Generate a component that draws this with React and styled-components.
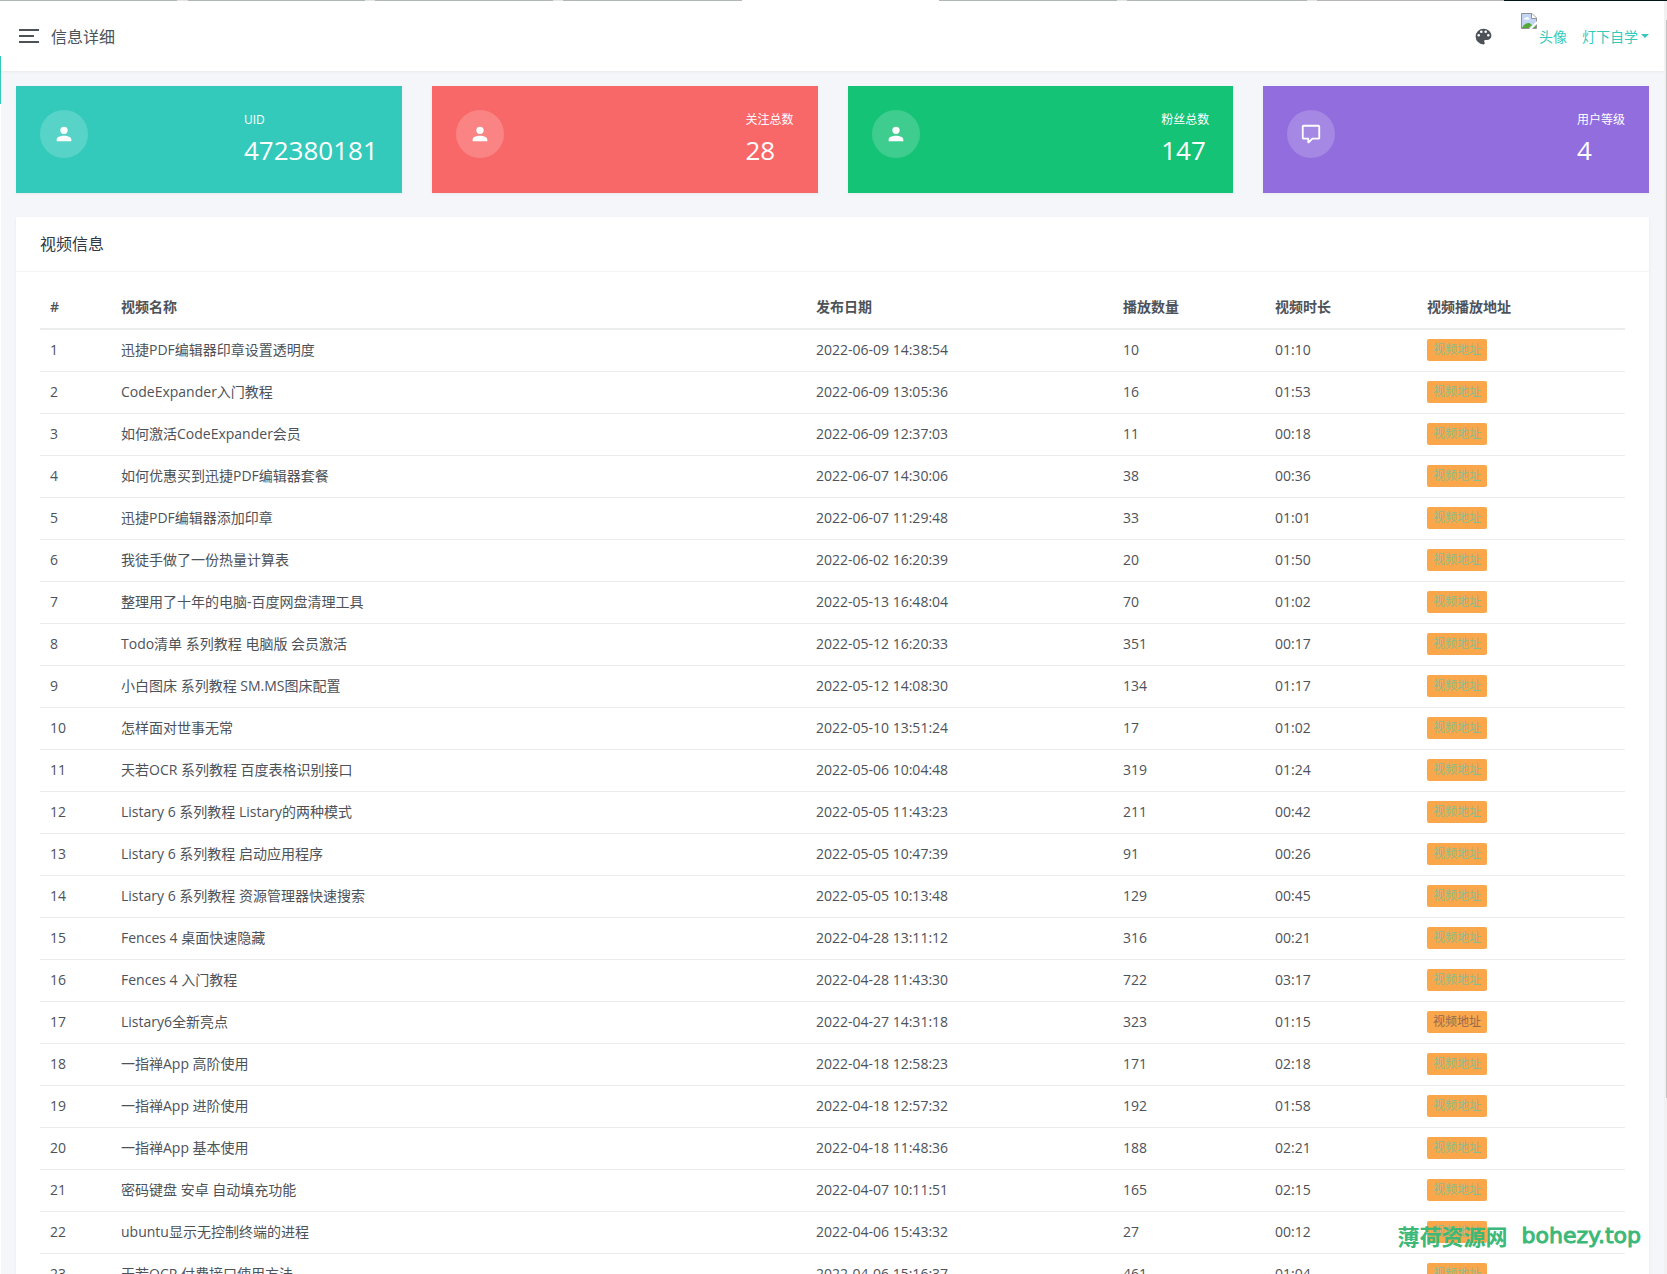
import styled, { createGlobalStyle } from 'styled-components'

const videos = [
  ['迅捷PDF编辑器印章设置透明度', '2022-06-09 14:38:54', 10, '01:10'],
  ['CodeExpander入门教程', '2022-06-09 13:05:36', 16, '01:53'],
  ['如何激活CodeExpander会员', '2022-06-09 12:37:03', 11, '00:18'],
  ['如何优惠买到迅捷PDF编辑器套餐', '2022-06-07 14:30:06', 38, '00:36'],
  ['迅捷PDF编辑器添加印章', '2022-06-07 11:29:48', 33, '01:01'],
  ['我徒手做了一份热量计算表', '2022-06-02 16:20:39', 20, '01:50'],
  ['整理用了十年的电脑-百度网盘清理工具', '2022-05-13 16:48:04', 70, '01:02'],
  ['Todo清单 系列教程 电脑版 会员激活', '2022-05-12 16:20:33', 351, '00:17'],
  ['小白图床 系列教程 SM.MS图床配置', '2022-05-12 14:08:30', 134, '01:17'],
  ['怎样面对世事无常', '2022-05-10 13:51:24', 17, '01:02'],
  ['天若OCR 系列教程 百度表格识别接口', '2022-05-06 10:04:48', 319, '01:24'],
  ['Listary 6 系列教程 Listary的两种模式', '2022-05-05 11:43:23', 211, '00:42'],
  ['Listary 6 系列教程 启动应用程序', '2022-05-05 10:47:39', 91, '00:26'],
  ['Listary 6 系列教程 资源管理器快速搜索', '2022-05-05 10:13:48', 129, '00:45'],
  ['Fences 4 桌面快速隐藏', '2022-04-28 13:11:12', 316, '00:21'],
  ['Fences 4 入门教程', '2022-04-28 11:43:30', 722, '03:17'],
  ['Listary6全新亮点', '2022-04-27 14:31:18', 323, '01:15'],
  ['一指禅App 高阶使用', '2022-04-18 12:58:23', 171, '02:18'],
  ['一指禅App 进阶使用', '2022-04-18 12:57:32', 192, '01:58'],
  ['一指禅App 基本使用', '2022-04-18 11:48:36', 188, '02:21'],
  ['密码键盘 安卓 自动填充功能', '2022-04-07 10:11:51', 165, '02:15'],
  ['ubuntu显示无控制终端的进程', '2022-04-06 15:43:32', 27, '00:12'],
  ['天若OCR 付费接口使用方法', '2022-04-06 15:16:37', 461, '01:04'],
]

const ACCOUNT = 'M12,4A4,4 0 0,1 16,8A4,4 0 0,1 12,12A4,4 0 0,1 8,8A4,4 0 0,1 12,4M12,14C16.42,14 20,15.79 20,18V20H4V18C4,15.79 7.58,14 12,14Z'
const COMMENT = 'M9,22A1,1 0 0,1 8,21V18H4A2,2 0 0,1 2,16V4C2,2.89 2.9,2 4,2H20A2,2 0 0,1 22,4V16A2,2 0 0,1 20,18H13.9L10.2,21.71C10,21.9 9.75,22 9.5,22H9M10,16V19.08L13.08,16H20V4H4V16H10Z'
const PALETTE = 'M17.5,12A1.5,1.5 0 0,1 16,10.5A1.5,1.5 0 0,1 17.5,9A1.5,1.5 0 0,1 19,10.5A1.5,1.5 0 0,1 17.5,12M14.5,8A1.5,1.5 0 0,1 13,6.5A1.5,1.5 0 0,1 14.5,5A1.5,1.5 0 0,1 16,6.5A1.5,1.5 0 0,1 14.5,8M9.5,8A1.5,1.5 0 0,1 8,6.5A1.5,1.5 0 0,1 9.5,5A1.5,1.5 0 0,1 11,6.5A1.5,1.5 0 0,1 9.5,8M6.5,12A1.5,1.5 0 0,1 5,10.5A1.5,1.5 0 0,1 6.5,9A1.5,1.5 0 0,1 8,10.5A1.5,1.5 0 0,1 6.5,12M12,3A9,9 0 0,0 3,12A9,9 0 0,0 12,21A1.5,1.5 0 0,0 13.5,19.5C13.5,19.11 13.35,18.76 13.11,18.5C12.88,18.23 12.73,17.88 12.73,17.5A1.5,1.5 0 0,1 14.23,16H16A5,5 0 0,0 21,11C21,6.58 16.97,3 12,3Z'

const stats = [
  { label: 'UID', value: '472380181', color: '#33cabb', icon: ACCOUNT },
  { label: '关注总数', value: '28', color: '#f96868', icon: ACCOUNT },
  { label: '粉丝总数', value: '147', color: '#15c377', icon: ACCOUNT },
  { label: '用户等级', value: '4', color: '#926dde', icon: COMMENT },
]

function Icon({ path, size }) {
  return (
    <svg width={size} height={size} viewBox="0 0 24 24" fill="currentColor" aria-hidden="true">
      <path d={path} />
    </svg>
  )
}

function MissingImage() {
  return (
    <svg width="16" height="16" viewBox="0 0 16 16" aria-hidden="true">
      <path d="M.5 .5H11L15.5 5V9L9 15.5H.5Z" fill="#c3d5f5" />
      <path d="M3 6.5C3 5 4.2 4.6 4.8 5C5.4 3.4 7.6 3.8 7.6 5.2C8.8 5.2 8.8 6.5 8 6.5Z" fill="#fff" />
      <path d="M1 15C3 11 6.5 9 9 10.5L11 12L8 15Z" fill="#56a936" />
      <path d="M.5 15.5V.5H11L15.5 5V15.5Z" fill="none" stroke="#929292" />
      <path d="M10.5 .5V5.5H15.5" fill="#fff" stroke="#929292" />
      <path d="M16 8V11L11 16H8Z" fill="#fff" />
      <path d="M15 12V15H12Z" fill="#56a936" />
    </svg>
  )
}

export default function App() {
  return (
    <Page>
      <GlobalStyle />
      <TabStrip />
      <Body>
        <SideEdge />
        <Main>
          <Header>
            <Toggle aria-label="menu"><i /><i /><i /></Toggle>
            <PageTitle>信息详细</PageTitle>
            <Palette aria-label="theme"><Icon path={PALETTE} size={21} /></Palette>
            <UserLink href="#user">
              <Avatar><MissingImage /><span>头像</span></Avatar>
              <UserName>灯下自学<Caret /></UserName>
            </UserLink>
          </Header>

          <Content>
            <Cards>
              {stats.map((stat) => (
                <Card key={stat.label} $color={stat.color}>
                  <Circle><Icon path={stat.icon} size={22} /></Circle>
                  <div>
                    <Label>{stat.label}</Label>
                    <Value>{stat.value}</Value>
                  </div>
                </Card>
              ))}
            </Cards>

            <Panel>
              <PanelTitle>视频信息</PanelTitle>
              <PanelBody>
                <Table>
                  <thead>
                    <tr>
                      <Th $width="71px">#</Th>
                      <Th>视频名称</Th>
                      <Th $width="307px">发布日期</Th>
                      <Th $width="152px">播放数量</Th>
                      <Th $width="152px">视频时长</Th>
                      <Th $width="208px">视频播放地址</Th>
                    </tr>
                  </thead>
                  <tbody>
                    {videos.map(([name, date, plays, length], index) => (
                      <tr key={name}>
                        <Td>{index + 1}</Td>
                        <Td>{name}</Td>
                        <Td>{date}</Td>
                        <Td>{plays}</Td>
                        <Td>{length}</Td>
                        <Td><Badge href="#video" $active={index === 16}>视频地址</Badge></Td>
                      </tr>
                    ))}
                  </tbody>
                </Table>
              </PanelBody>
            </Panel>
          </Content>
        </Main>
        <ScrollTrack><ScrollThumb /></ScrollTrack>
      </Body>
      <Watermark><b>薄荷资源网</b><span>bohezy.top</span></Watermark>
    </Page>
  )
}

const GlobalStyle = createGlobalStyle`
  * {
    box-sizing: border-box;
  }
  body {
    margin: 0;
    overflow: hidden;
    font-family: "Open Sans", "Noto Sans CJK SC", sans-serif;
    font-size: 14px;
    line-height: 21px;
    color: #4d5259;
    background: #f5f6fa;
  }
  a {
    color: #33cabb;
    text-decoration: none;
  }
  button {
    display: flex;
    padding: 0;
    border: none;
    color: inherit;
    background: transparent;
  }
  svg {
    display: block;
  }
`

const Page = styled.div`
  position: relative;
  display: flex;
  flex-direction: column;
  height: 100vh;
  overflow: hidden;
`

const TabStrip = styled.div`
  flex: none;
  height: 1px;
  background: linear-gradient(
    90deg,
    #b1b7b5 10.6%, #e3e5e5 10.6% 11.3%,
    #b1b7b5 11.3% 21.9%, #e3e5e5 21.9% 22.5%,
    #b1b7b5 22.5% 33.2%, #e3e5e5 33.2% 33.8%,
    #b1b7b5 33.8% 44.5%, #fff 44.5% 56.3%,
    #b1b7b5 56.3% 67%, #e3e5e5 67% 67.6%,
    #b1b7b5 67.6% 78.4%, #e3e5e5 78.4% 79%,
    #b7b5b5 79% 90.2%, #04151a 90.2%
  );
`

const Body = styled.div`
  display: flex;
  flex: 1;
  min-height: 0;
`

const SideEdge = styled.div`
  flex: none;
  width: 1px;
  background: linear-gradient(#fff 55px, #33cabb 55px 103px, #fff 103px);
`

const Main = styled.main`
  flex: 1;
  min-width: 0;
  overflow: hidden;
`

const Header = styled.header`
  display: flex;
  align-items: center;
  height: 70px;
  padding: 0 15px 0 18px;
  background: #fff;
  box-shadow: 0 1px 3px rgba(0, 0, 0, .05);
`

const Toggle = styled.button`
  flex-direction: column;
  gap: 4px;

  i {
    width: 20px;
    height: 2px;
    background: #4d5259;
  }
  i:nth-child(2) {
    width: 15px;
  }
`

const PageTitle = styled.h1`
  margin: 0 auto 0 12px;
  padding-top: 2px;
  font-size: 16px;
  font-weight: 400;
`

const Palette = styled.button`
  margin-right: 27px;
`

const UserLink = styled.a`
  display: flex;
  align-items: center;
  gap: 15px;
`

const Avatar = styled.span`
  display: flex;
  align-items: flex-start;
  gap: 2px;
  height: 46px;

  span {
    margin-top: 13px;
  }
`

const UserName = styled.span`
  display: flex;
  align-items: center;
  gap: 3px;
`

const Caret = styled.i`
  border: 4px solid transparent;
  border-top-color: currentColor;
  border-bottom: 0;
`

const Content = styled.div`
  padding: 15px;
`

const Cards = styled.div`
  display: grid;
  grid-template-columns: repeat(4, 1fr);
  gap: 30px;
  margin-bottom: 24px;
`

const Card = styled.section`
  display: flex;
  justify-content: space-between;
  padding: 24px;
  color: #fff;
  background: ${props => props.$color};
  box-shadow: 0 1px 3px rgba(0, 0, 0, .05);
`

const Circle = styled.div`
  display: flex;
  align-items: center;
  justify-content: center;
  width: 48px;
  height: 48px;
  border-radius: 50%;
  background: rgba(255, 255, 255, .18);
`

const Label = styled.p`
  margin: 0 0 2px;
  font-size: 12px;
  line-height: 20px;
`

const Value = styled.p`
  margin: 0;
  font-size: 26px;
  line-height: 37px;
`

const Panel = styled.section`
  background: #fff;
  box-shadow: 0 1px 3px rgba(0, 0, 0, .05);
`

const PanelTitle = styled.h2`
  margin: 0;
  padding: 16px 24px;
  border-bottom: 1px solid #f3f4f5;
  font-size: 16px;
  font-weight: 400;
  line-height: 22px;
  color: #313944;
`

const PanelBody = styled.div`
  padding: 15px 24px;
`

const Table = styled.table`
  width: 100%;
  table-layout: fixed;
  border-spacing: 0;
`

const Th = styled.th`
  width: ${props => props.$width || 'auto'};
  height: 43px;
  padding: 0 10px 2px;
  border-bottom: 2px solid #ebeded;
  font-weight: 600;
  text-align: left;
`

const Td = styled.td`
  height: 42px;
  padding: 0 10px 2px;
  border-bottom: 1px solid #ebeded;
`

const Badge = styled.a`
  display: block;
  width: fit-content;
  padding: 0 6px;
  border-radius: 2px;
  font-size: 12px;
  line-height: 22px;
  color: ${props => props.$active ? '#8f6c50' : '#8abd8c'};
  background: #faa64b;
`

const ScrollTrack = styled.div`
  flex: none;
  width: 3px;
  padding-top: 19px;
  background: #f1f1f1;
`

const ScrollThumb = styled.div`
  width: 1px;
  height: 86%;
  margin-left: auto;
  background: #c1c1c1;
`

const Watermark = styled.div`
  position: absolute;
  right: 26px;
  bottom: 28px;
  display: flex;
  gap: 14px;
  font-family: "DejaVu Sans", "Noto Sans CJK SC", sans-serif;
  font-size: 22px;
  color: #3cb878;

  b {
    font-family: "Noto Sans CJK SC", sans-serif;
  }
  span {
    -webkit-text-stroke: 1px #3cb878;
  }
`
